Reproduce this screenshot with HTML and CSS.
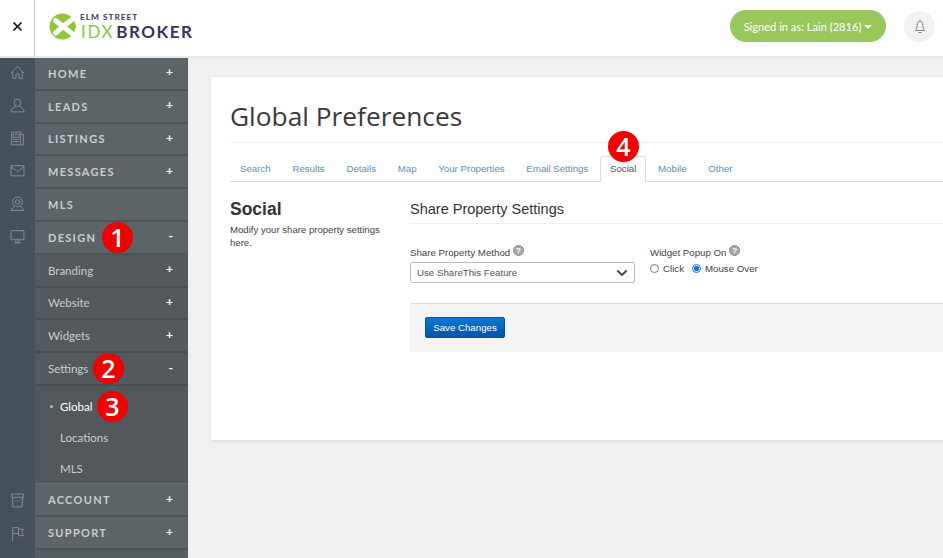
FILE: index.html
```html
<!DOCTYPE html>
<html lang="en">
<head>
  <meta charset="UTF-8" />
  <title>Global Preferences</title>
  <link rel="stylesheet" href="styles.css">
</head>
<body>
  <header class="topbar">
    <div class="close-cell">
      <svg width="11" height="11" viewBox="0 0 11 11"><path d="M1.500 1.500l8 8M9.500 1.500l-8 8" stroke="#111" stroke-width="1.700" fill="none"/></svg>
    </div>
    <div class="logo">
      <svg class="logo-mark" width="27" height="27" viewBox="0 0 27 27">
        <circle cx="13.500" cy="13.500" r="13" fill="#8dc63f"/>
        <path d="M6.500 7.500L14 13.500 6.500 20M14 13.500L23 6.500M14 13.500L23 20.500" stroke="#fff" stroke-width="5" stroke-linecap="round" fill="none"/>
        <path d="M24 9l3.500 4.500L24 18z" fill="#8dc63f"/>
      </svg>
      <div class="logo-text">
        <span class="logo-top">ELM STREET</span>
        <span class="logo-main"><span class="logo-idx">IDX</span>BROKER</span>
      </div>
    </div>
    <div class="top-right">
      <button class="signed-in">Signed in as: Lain (2816)<span class="caret"></span></button>
      <div class="bell">
        <svg width="12" height="15" viewBox="0 0 12 15"><path d="M6 1v1.500M3.500 3.500C4 2.700 5 2.400 6 2.400s2 .3 2.500 1.100c.5 1 .4 5 .9 6.300l1.100 1.700H1.500l1.100-1.700c.5-1.300.4-5.300.9-6.300zM4.500 13.500h3" stroke="#777" stroke-width=".9" fill="none"/></svg>
      </div>
    </div>
  </header>

  <div class="layout">
    <div class="rail">
      <div class="rail-top">
        <svg class="rail-icon" viewBox="0 0 14 14"><path d="M1 7.500C3 5.500 5 3 7 1.500c2 1.500 4 4 6 6M2.500 6v6.500h3V8.500h3v4h3V6"/></svg>
        <svg class="rail-icon" viewBox="0 0 14 14"><ellipse cx="7" cy="4.500" rx="3" ry="3.500"/><path d="M5 7.500C4.700 9 1 9.500 1 11.800V13h12v-1.200c0-2.300-3.700-2.800-4-4.300"/></svg>
        <svg class="rail-icon" viewBox="0 0 14 14"><path d="M1.500 1h8.500v12H1.500zM10 3h2.500v10H10M3 3h5.500v3H3zM3 8h5.500M3 10h5.500"/></svg>
        <svg class="rail-icon" viewBox="0 0 14 14"><path d="M1 2.500h12v9.500H1zM1 3.500L7 8l6-4.500"/></svg>
        <svg class="rail-icon" viewBox="0 0 14 14"><circle cx="7" cy="5.500" r="4.500"/><circle cx="7" cy="5.500" r="2"/><path d="M4 9.500L1 13.500h12L10 9.500"/></svg>
        <svg class="rail-icon" viewBox="0 0 14 14"><path d="M1 1.500h12v8.500H1zM5.500 10v2.500h3V10M4 13h6"/></svg>
      </div>
      <div class="rail-bottom">
        <svg class="rail-icon" viewBox="0 0 14 14"><path d="M1.500 1h11v3h-11zM2.500 4v9h9V4M5 7.500h1.200M7.800 7.500H9"/></svg>
        <svg class="rail-icon" viewBox="0 0 14 14"><path d="M2.500 14V1.500h5.500v1.500h4.500l-1.500 3 1.500 3H8V7H2.500M8 3v4"/></svg>
      </div>
    </div>

    <nav class="sidenav">
      <a class="nav-row">HOME<span class="sign">+</span></a>
      <a class="nav-row">LEADS<span class="sign">+</span></a>
      <a class="nav-row">LISTINGS<span class="sign">+</span></a>
      <a class="nav-row">MESSAGES<span class="sign">+</span></a>
      <a class="nav-row">MLS</a>
      <a class="nav-row has-badge">DESIGN<span class="badge badge-nav">1</span><span class="sign">-</span></a>
      <a class="nav-row sub">Branding<span class="sign">+</span></a>
      <a class="nav-row sub">Website<span class="sign">+</span></a>
      <a class="nav-row sub">Widgets<span class="sign">+</span></a>
      <a class="nav-row sub has-badge">Settings<span class="badge badge-nav">2</span><span class="sign">-</span></a>
      <div class="subsub">
        <a class="subsub-row active">Global<span class="badge badge-nav">3</span></a>
        <a class="subsub-row">Locations</a>
        <a class="subsub-row">MLS</a>
      </div>
      <a class="nav-row">ACCOUNT<span class="sign">+</span></a>
      <a class="nav-row">SUPPORT<span class="sign">+</span></a>
    </nav>

    <main class="content">
      <section class="card">
        <h1>Global Preferences</h1>
        <ul class="tabs">
          <li><a>Search</a></li>
          <li><a>Results</a></li>
          <li><a>Details</a></li>
          <li><a>Map</a></li>
          <li><a>Your Properties</a></li>
          <li><a>Email Settings</a></li>
          <li class="active"><a>Social</a><span class="badge badge-tab">4</span></li>
          <li><a>Mobile</a></li>
          <li><a>Other</a></li>
        </ul>
        <div class="panel">
          <aside class="panel-side">
            <h2>Social</h2>
            <p>Modify your share property settings here.</p>
          </aside>
          <div class="panel-main">
            <h3>Share Property Settings</h3>
            <div class="fields">
              <div class="field-method">
                <label>Share Property Method <span class="help">?</span></label>
                <div class="select">Use ShareThis Feature
                  <svg width="12" height="8" viewBox="0 0 12 8"><path d="M1.300 1.500L6 6l4.700-4.500" stroke="#444" stroke-width="1.800" fill="none"/></svg>
                </div>
              </div>
              <div class="field-popup">
                <label>Widget Popup On <span class="help">?</span></label>
                <div class="radios">
                  <span class="radio"></span><span>Click</span>
                  <span class="radio checked"></span><span>Mouse Over</span>
                </div>
              </div>
            </div>
            <div class="actions">
              <button class="save">Save Changes</button>
            </div>
          </div>
        </div>
      </section>
    </main>
  </div>
</body>
</html>
```

FILE: styles.css
```css
* {
  box-sizing: border-box;
}

html, body {
  height: 100%;
}

body {
  margin: 0;
  font-family: 'Liberation Sans', Arial, sans-serif;
  background: #f0f0f0;
  overflow: hidden;
  color: #333;
}

.topbar {
  height: 58px;
  background: #fff;
  border-bottom: 2px solid #e8e8e8;
  display: flex;
  align-items: stretch;
}

.close-cell {
  width: 35px;
  border-right: 1px solid #c4c4c4;
  padding-bottom: 4px;
  display: flex;
  align-items: center;
  justify-content: center;
}

.logo {
  margin-left: 14px;
  display: flex;
  align-items: center;
  gap: 4px;
  height: 52px;
}

.logo-text {
  display: flex;
  flex-direction: column;
  font-family: 'Lato', sans-serif;
  color: #37335f;
  margin-top: 2px;
}

.logo-top {
  font-size: 8.300px;
  font-weight: 700;
  letter-spacing: 1px;
  line-height: 9px;
}

.logo-main {
  font-size: 17px;
  font-weight: 700;
  letter-spacing: 1.500px;
  line-height: 19px;
  margin-left: 1px;
}

.logo-idx {
  color: #8dc63f;
  font-weight: 400;
  letter-spacing: 1.700px;
  margin-right: 2px;
}

.top-right {
  margin-left: auto;
  margin-right: 8px;
  display: flex;
  align-items: center;
  gap: 18px;
  padding-bottom: 4px;
}

.signed-in {
  width: 156px;
  height: 32px;
  border: none;
  border-radius: 16px;
  background: #98c75b;
  color: #fff;
  font-family: 'Lato', sans-serif;
  font-size: 11.100px;
  padding: 0;
}

.caret {
  display: inline-block;
  margin-left: 3px;
  vertical-align: 2px;
  border-top: 4px solid #fff;
  border-left: 4px solid transparent;
  border-right: 4px solid transparent;
}

.bell {
  width: 31px;
  height: 31px;
  border-radius: 50%;
  background: #f1f2f3;
  display: flex;
  align-items: center;
  justify-content: center;
}

.layout {
  display: flex;
  height: 500px;
}

.rail {
  width: 35px;
  background: #47515a;
  display: flex;
  flex-direction: column;
  justify-content: space-between;
  align-items: center;
  padding: 7px 0 17px;
}

.rail-top, .rail-bottom {
  display: flex;
  flex-direction: column;
  align-items: center;
  gap: 17.800px;
}

.rail-icon {
  width: 15px;
  height: 15px;
  fill: none;
  stroke: #8f959a;
  stroke-width: .8;
}

.sidenav {
  width: 153px;
  background: #565d61;
  display: flex;
  flex-direction: column;
}

.nav-row {
  height: 32.800px;
  flex: none;
  background: #5c6468;
  border-bottom: 2px solid #4c5458;
  border-right: 1px solid #52595d;
  padding: 0 13px;
  display: flex;
  align-items: center;
  font-family: 'Lato', sans-serif;
  font-weight: 700;
  font-size: 11px;
  letter-spacing: 1.300px;
  color: #c9cccd;
  position: relative;
}

.nav-row.sub {
  font-weight: 400;
  font-size: 11.500px;
  letter-spacing: 0;
  background: #53595d;
  border-bottom-color: #484f52;
}

.sign {
  margin-left: auto;
  margin-right: 1px;
  margin-top: -3px;
  font-size: 12px;
  font-weight: 700;
  letter-spacing: 0;
  color: #fff;
}

.badge {
  display: inline-flex;
  align-items: center;
  justify-content: center;
  width: 31px;
  height: 31px;
  border-radius: 50%;
  background: #f00000;
  color: #fff;
  font-family: 'Open Sans', sans-serif;
  font-weight: 600;
  font-size: 25px;
  letter-spacing: 0;
  line-height: 1;
}

.badge-nav {
  position: absolute;
  top: 50%;
  margin-top: -15.500px;
  left: 67px;
}

.nav-row.sub .badge-nav {
  left: 58px;
}

.subsub {
  height: 98.500px;
  flex: none;
  background: #52585c;
  border-bottom: 1px solid #666c70;
  padding-top: 5px;
  display: flex;
  flex-direction: column;
}

.subsub-row {
  height: 31px;
  flex: none;
  padding-left: 25px;
  display: flex;
  align-items: center;
  font-family: 'Lato', sans-serif;
  font-size: 11.500px;
  color: #c9cccd;
  position: relative;
}

.subsub-row.active {
  color: #fff;
}

.subsub-row.active::before {
  content: "";
  position: absolute;
  left: 15px;
  top: 14px;
  width: 3px;
  height: 3px;
  border-radius: 50%;
  background: #6fe0d0;
}

.subsub-row .badge-nav {
  left: 62px;
}

.content {
  flex: 1;
  min-width: 0;
  padding: 19px 0 0 23px;
}

.card {
  background: #fff;
  height: 365px;
  border-bottom: 2px solid #e2e2e2;
  box-shadow: 0 0 2px rgba(0, 0, 0, .08);
  padding: 0 0 0 19px;
}

h1 {
  margin: 0;
  padding: 22px 0 10px;
  height: 66px;
  font-family: 'Open Sans', sans-serif;
  font-weight: 400;
  font-size: 26.300px;
  line-height: 34px;
  color: #3a3a3a;
  border-bottom: 1px solid #eee;
}

.tabs {
  list-style: none;
  margin: 0;
  padding: 13px 0 0;
  display: flex;
  height: 39px;
  border-bottom: 1px solid #ddd;
  font-size: 9.700px;
}

.tabs li {
  position: relative;
  padding: 0 10px;
  margin-right: 1.700px;
  height: 26px;
  line-height: 26px;
  color: #4d94c1;
}

.tabs li.active {
  color: #555;
  background: #fff;
  border: 1px solid #ddd;
  border-bottom-color: #fff;
  border-radius: 3px 3px 0 0;
  line-height: 24px;
  padding: 0 9px;
}

.badge-tab {
  position: absolute;
  left: 7px;
  top: -26px;
}

.panel {
  display: flex;
}

.panel-side {
  width: 180px;
  flex: none;
}

h2 {
  margin: 16px 0 0;
  font-size: 17.500px;
  line-height: 22px;
  font-weight: 700;
  color: #333;
}

.panel-side p {
  margin: 3px 0 0;
  width: 160px;
  font-size: 9.600px;
  line-height: 13px;
  color: #444;
}

.panel-main {
  flex: 1;
}

h3 {
  margin: 0;
  padding: 19px 0 6px;
  height: 42px;
  font-size: 14.500px;
  line-height: 17px;
  font-weight: 400;
  color: #333;
  border-bottom: 1px solid #eee;
}

.fields {
  display: flex;
  padding-top: 21px;
  height: 79px;
  font-size: 9.700px;
}

.field-method {
  width: 225px;
  margin-right: 15px;
}

label {
  display: block;
  height: 14px;
  line-height: 14px;
  color: #444;
}

.help {
  display: inline-block;
  width: 11px;
  height: 11px;
  border-radius: 50%;
  background: #aaa;
  border: 1px solid #888;
  color: #fff;
  font-size: 8px;
  line-height: 9px;
  text-align: center;
  vertical-align: 3px;
  font-weight: 700;
}

.select {
  margin-top: 3px;
  height: 21px;
  border: 1px solid #bbb;
  border-radius: 2px;
  padding: 0 6px;
  display: flex;
  align-items: center;
  justify-content: space-between;
  color: #555;
}

.radios {
  display: flex;
  align-items: center;
  gap: 4px;
  margin-top: 4px;
  color: #444;
}

.radio {
  width: 9px;
  height: 9px;
  border: 1px solid #777;
  border-radius: 50%;
  background: #fff;
}

.radio.checked {
  margin-left: 4px;
  border-color: #1a73e8;
  background: radial-gradient(circle, #1a73e8 0 2.500px, #fff 3px);
}

.actions {
  background: #f4f4f4;
  border-top: 1px solid #ddd;
  height: 49px;
  padding: 13px 15px;
}

.save {
  width: 80px;
  height: 21px;
  padding: 0;
  border: 1px solid #04509d;
  border-radius: 2px;
  background: linear-gradient(to bottom, #0a77d5, #0355a8);
  color: #fff;
  font-family: 'Liberation Sans', Arial, sans-serif;
  font-size: 9.700px;
  font-weight: 400;
}
```
